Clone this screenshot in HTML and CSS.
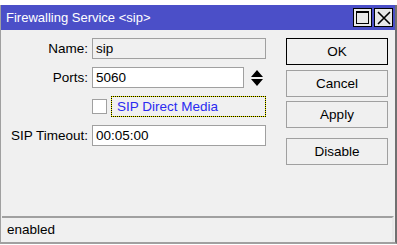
FILE: index.html
```html
<!DOCTYPE html>
<html>
<head>
    <title>Firewalling Service &lt;sip&gt;</title>
    <link rel="stylesheet" href="styles.css">
</head>
<body>
    <div class="window">
        <div class="titlebar">
            <span class="title">Firewalling Service &lt;sip&gt;</span>
            <div class="controls">
                <span class="ctl"><span class="max-box"></span></span>
                <span class="ctl">
                    <svg width="14" height="14" viewBox="0 0 14 14"><path d="M1 1 L13 13 M13 1 L1 13" stroke="#000" stroke-width="1.6" fill="none"/></svg>
                </span>
            </div>
        </div>

        <div class="content">
            <div class="form">
                <label class="label">Name:</label>
                <div class="field disabled">sip</div>

                <label class="label">Ports:</label>
                <div class="ports">
                    <div class="field short">5060</div>
                    <span class="spinner">
                        <svg width="12" height="16" viewBox="0 0 12 16"><path d="M6 0 L12 7 L0 7 Z M0 9 L12 9 L6 16 Z" fill="#000"/></svg>
                    </span>
                </div>

                <span></span>
                <div class="check-row">
                    <span class="checkbox"></span>
                    <span class="check-label">SIP Direct Media</span>
                </div>

                <label class="label">SIP Timeout:</label>
                <div class="field">00:05:00</div>
            </div>

            <div class="buttons">
                <button class="btn default">OK</button>
                <button class="btn">Cancel</button>
                <button class="btn">Apply</button>
                <button class="btn spaced">Disable</button>
            </div>
        </div>

        <div class="status">enabled</div>
    </div>
</body>
</html>
```

FILE: styles.css
```css
body {
    margin: 0;
    background-color: #ffffff;
    font-family: "Liberation Sans", Arial, sans-serif;
    font-size: 13.5px;
    color: #000;
}

.window {
    margin-top: 5px;
    height: 239px;
    box-sizing: border-box;
    border: 1px solid #a0a0a0;
    border-top: none;
    border-right: 2px solid #707070;
    border-bottom: 2px solid #a0a0a0;
    background-color: #f0f0f0;
    display: flex;
    flex-direction: column;
}

.titlebar {
    height: 25px;
    background-color: #4b4fc8;
    display: flex;
    align-items: center;
    justify-content: space-between;
    padding: 0 2px 0 5px;
}

.title {
    color: #fff;
    font-size: 13px;
}

.controls {
    display: flex;
    gap: 2px;
}

.ctl {
    width: 17px;
    height: 17px;
    background-color: #e8e8e8;
    border: 1px solid #000;
    display: flex;
    align-items: center;
    justify-content: center;
}

.max-box {
    width: 13px;
    height: 13px;
    box-sizing: border-box;
    border: 1px solid #000;
    border-top-width: 2px;
}

.content {
    flex: 1;
    display: flex;
    padding: 8px 0 0 8px;
}

.form {
    display: grid;
    grid-template-columns: 79px 174px;
    grid-auto-rows: 21px;
    column-gap: 4px;
    row-gap: 8px;
    align-items: center;
}

.label {
    text-align: right;
}

.field {
    height: 21px;
    box-sizing: border-box;
    border: 1px solid #a0a0a0;
    background-color: #fff;
    padding: 0 3px;
    line-height: 19px;
}

.field.disabled {
    background-color: #f0f0f0;
}

.ports {
    display: flex;
    align-items: center;
    gap: 7px;
}

.field.short {
    width: 152px;
}

.spinner {
    display: flex;
}

.check-row {
    display: flex;
    align-items: center;
    gap: 4px;
}

.checkbox {
    width: 15px;
    height: 15px;
    box-sizing: border-box;
    border: 1px solid #a0a0a0;
    background-color: #fff;
}

.check-label {
    flex: 1;
    height: 21px;
    box-sizing: border-box;
    border: 1px dotted #000;
    background: linear-gradient(#f0f0f0, #f0f0f0) padding-box, linear-gradient(#f0f000, #f0f000) border-box;
    color: #2a2af0;
    padding: 0 5px;
    line-height: 19px;
}

.buttons {
    display: flex;
    flex-direction: column;
    gap: 4px;
    margin-left: 20px;
}

.btn {
    width: 102px;
    height: 27px;
    border: 1px solid #a0a0a0;
    background-color: #f0f0f0;
    font-family: "Liberation Sans", Arial, sans-serif;
    font-size: 13.5px;
    color: #000;
    padding: 0;
}

.btn.default {
    border-color: #000;
    margin-bottom: 1px;
}

.btn.spaced {
    margin-top: 6px;
}

.status {
    height: 26px;
    box-sizing: border-box;
    margin: 0 1px 0 1px;
    border-top: 2px solid #a0a0a0;
    border-right: 2px solid #e8e8e8;
    padding-left: 5px;
    line-height: 24px;
}
```
